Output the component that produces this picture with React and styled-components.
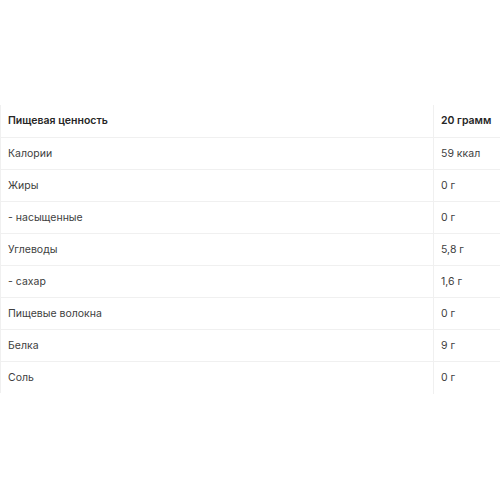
import React from 'react'
import styled, { createGlobalStyle } from 'styled-components'

const GlobalStyle = createGlobalStyle`
  html, body {
    margin: 0;
    padding: 0;
    background: #fff;
    font-family: Inter, "Noto Sans", sans-serif;
  }
`

const rows = [
  ['Калории', '59 ккал'],
  ['Жиры', '0 г'],
  ['- насыщенные', '0 г'],
  ['Углеводы', '5,8 г'],
  ['- сахар', '1,6 г'],
  ['Пищевые волокна', '0 г'],
  ['Белка', '9 г'],
  ['Соль', '0 г'],
]

const App = () => {
  return <Wrapper>
    <GlobalStyle />
    <Table>
      <thead>
        <Row>
          <Cell as="th" $first>Пищевая ценность</Cell>
          <Cell as="th">20 грамм</Cell>
        </Row>
      </thead>
      <tbody>
        {rows.map(([name, value], i) => (
          <Row key={i} $last={i === rows.length - 1}>
            <Cell $first>{name}</Cell>
            <Cell>{value}</Cell>
          </Row>
        ))}
      </tbody>
    </Table>
  </Wrapper>
}

const Wrapper = styled.section`
  padding-top: 105px;
  width: 500px;
`

const Table = styled.table`
  width: 100%;
  border-collapse: collapse;
  border-left: 1px solid #f0f0f0;
  table-layout: fixed;
`

const Row = styled.tr`
  height: 32px;
  border-bottom: 1px solid ${p => (p.$last ? 'transparent' : '#f0f0f0')};
`

const Cell = styled.td`
  width: ${p => (p.$first ? '425px' : 'auto')};
  padding: 0 0 0 7px;
  text-align: left;
  font-size: 10.5px;
  font-weight: 400;
  color: #404040;
  border-right: ${p => (p.$first ? '1px solid #f0f0f0' : 'none')};
  vertical-align: middle;

  th& {
    font-weight: 600;
    color: #262626;
  }
`

export default App
